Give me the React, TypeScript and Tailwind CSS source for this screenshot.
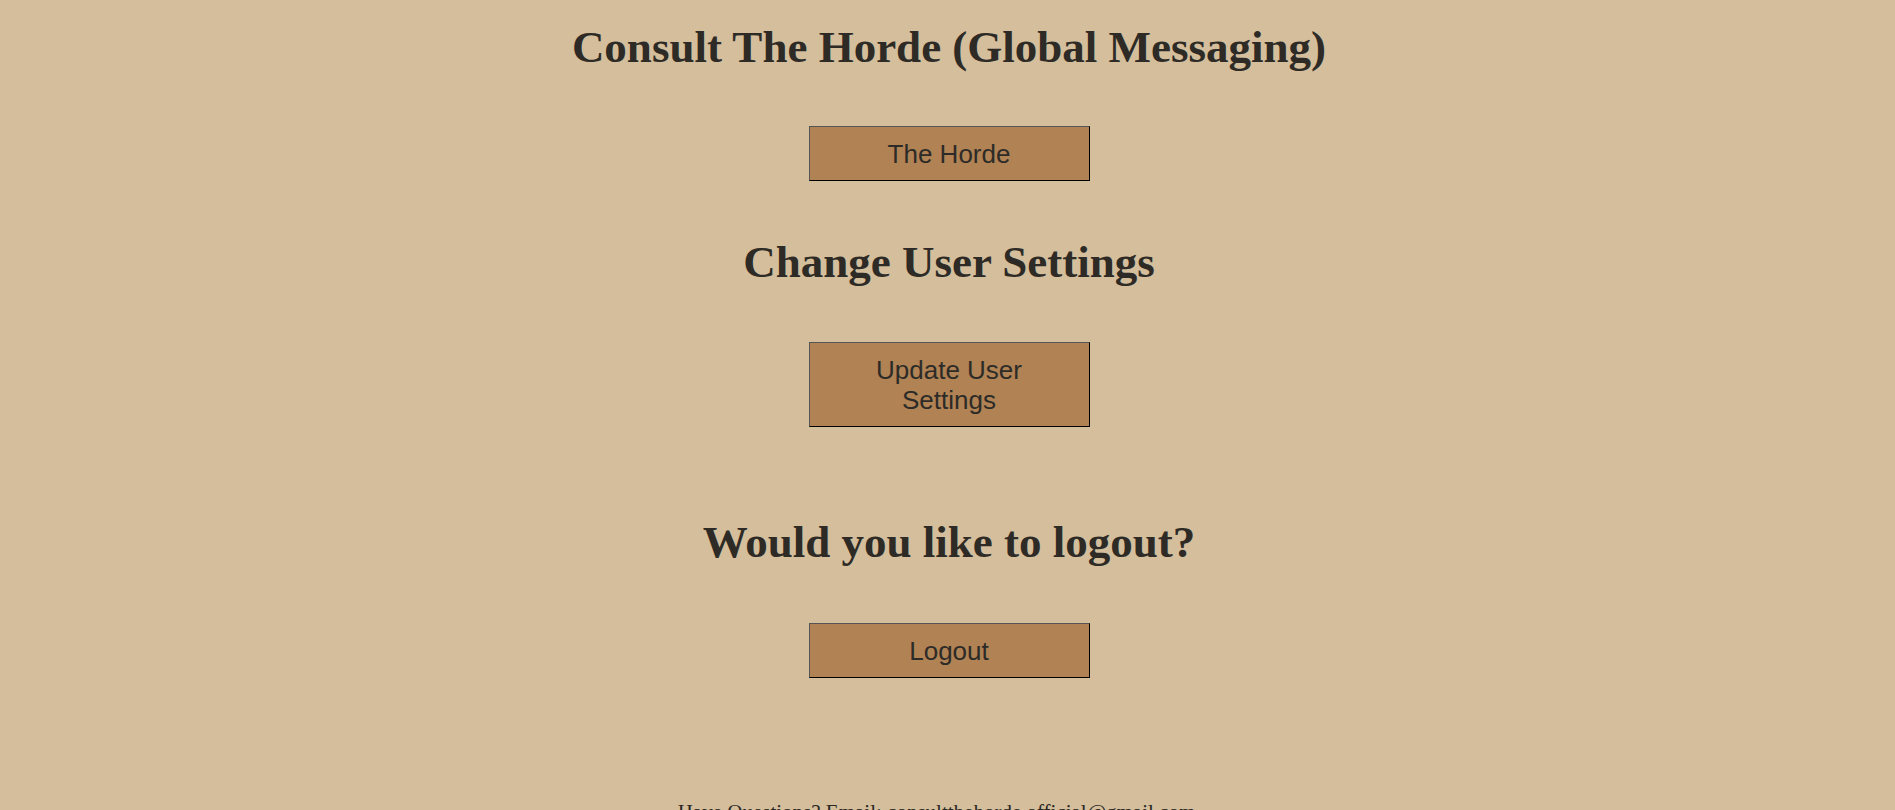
const serif = { fontFamily: '"Liberation Serif", "Times New Roman", serif' };

function HordeButton({ label, className = '' }: { label: string; className?: string }) {
  return (
    <button
      className={`w-[281px] px-[20px] py-[11.5px] bg-[#b08254] text-[#2d2b27] text-[26px] leading-[30px] border border-t-[#555555] border-l-[#555555] border-r-black border-b-black ${className}`}
      style={{ fontFamily: '"Liberation Sans", Arial, sans-serif' }}
    >
      {label}
    </button>
  );
}

function Heading({ children, className = '' }: { children: React.ReactNode; className?: string }) {
  return (
    <h1 className={`text-[45px] leading-[50px] font-bold text-[#2e2b26] ${className}`} style={serif}>
      {children}
    </h1>
  );
}

export default function App() {
  return (
    <div className="min-h-[810px] bg-[#d4be9c] pl-[3px] flex flex-col items-center text-center">
      <Heading className="mt-[22px]">Consult The Horde (Global Messaging)</Heading>
      <HordeButton label="The Horde" className="mt-[54px]" />

      <Heading className="mt-[56px]">Change User Settings</Heading>
      <HordeButton label="Update User Settings" className="mt-[55px]" />

      <Heading className="mt-[90px]">Would you like to logout?</Heading>
      <HordeButton label="Logout" className="mt-[56px]" />

      <footer className="mt-[122px] pb-4 pr-[25px] text-[21px] leading-[24px] text-[#2a2824]" style={serif}>
        Have Questions? Email: consultthehorde.official@gmail.com
      </footer>
    </div>
  );
}
